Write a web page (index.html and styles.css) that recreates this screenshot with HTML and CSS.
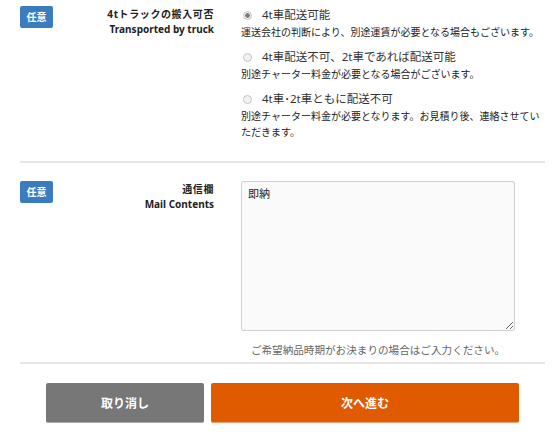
FILE: index.html
```html
<!DOCTYPE html>
<html lang="ja">

<head>
    <meta charset="UTF-8">
    <meta name="viewport" content="width=device-width, initial-scale=1.0">
    <title>配送情報</title>
    <link rel="stylesheet" href="styles.css">
</head>

<body>

    <div class="form">
        <div class="row">
            <div class="badge-col"><span class="badge">任意</span></div>
            <div class="label">
                <span class="label-ja">4tトラックの搬入可否</span>
                <span class="label-en">Transported by truck</span>
            </div>
            <div class="field">
                <label class="option">
                    <span class="option-title"><input type="radio" name="truck" checked>4t車配送可能</span>
                    <span class="option-desc">運送会社の判断により、別途運賃が必要となる場合もございます。</span>
                </label>
                <label class="option">
                    <span class="option-title"><input type="radio" name="truck">4t車配送不可、2t車であれば配送可能</span>
                    <span class="option-desc">別途チャーター料金が必要となる場合がございます。</span>
                </label>
                <label class="option">
                    <span class="option-title"><input type="radio" name="truck">4t車･2t車ともに配送不可</span>
                    <span class="option-desc">別途チャーター料金が必要となります。お見積り後、連絡させていただきます。</span>
                </label>
            </div>
        </div>

        <div class="row row-mail">
            <div class="badge-col"><span class="badge">任意</span></div>
            <div class="label">
                <span class="label-ja">通信欄</span>
                <span class="label-en">Mail Contents</span>
            </div>
            <div class="field">
                <textarea id="mailContents">即納</textarea>
                <p class="help">ご希望納品時期がお決まりの場合はご入力ください。</p>
            </div>
        </div>

        <div class="actions">
            <button class="btn btn-cancel">取り消し</button>
            <button class="btn btn-next">次へ進む</button>
        </div>
    </div>

</body>

</html>
```

FILE: styles.css
```css
body {
    margin: 0;
    padding: 0;
    background-color: #fff;
    color: #333;
    font-family: "Noto Sans", "Noto Sans CJK JP", sans-serif;
}

.form {
    width: 525px;
    padding: 6px 0 0 20px;
}

.row {
    display: flex;
    padding-bottom: 21px;
    border-bottom: 2px solid #e5e5e5;
}

.row-mail {
    padding-top: 18px;
    padding-bottom: 4px;
}

.badge-col {
    width: 33px;
    flex: none;
}

.badge {
    display: block;
    width: 33px;
    height: 22px;
    line-height: 22px;
    text-align: center;
    background-color: #3a7dbf;
    color: #fff;
    font-size: 10px;
    font-weight: bold;
    border-radius: 2px;
}

.label {
    width: 161px;
    flex: none;
    text-align: right;
    padding-top: 1px;
    font-size: 10px;
    font-weight: bold;
    line-height: 15px;
    color: #222;
}

.label-ja,
.label-en {
    display: block;
}

.label-ja {
    letter-spacing: 0.6px;
}

.field {
    margin-left: 27px;
    width: 304px;
}

.option {
    display: block;
    margin-bottom: 8px;
}

.option:last-child {
    margin-bottom: 0;
}

.option-title {
    display: flex;
    align-items: center;
    font-size: 11.5px;
    line-height: 18px;
    color: #333;
}

.option-desc {
    display: block;
    font-size: 10px;
    line-height: 16px;
    color: #222;
}

input[type="radio"] {
    appearance: none;
    -webkit-appearance: none;
    width: 9px;
    height: 9px;
    margin: 0 10px 0 2px;
    border: 1px solid #c4c4c4;
    border-radius: 50%;
    background-color: #f2f2f2;
}

input[type="radio"]:checked {
    background: radial-gradient(circle, #7a7a7a 0 2px, #f2f2f2 2.6px);
}

#mailContents {
    display: block;
    box-sizing: border-box;
    width: 274px;
    height: 150px;
    margin: 0;
    padding: 3px 6px;
    border: 1px solid #cfcfcf;
    border-radius: 2px;
    background-color: #fafafa;
    font-family: "Liberation Serif", "Noto Sans CJK JP", serif;
    font-size: 11px;
    color: #222;
}

.help {
    width: 274px;
    margin: 11px 0 0;
    text-align: center;
    font-size: 10.6px;
    line-height: 16px;
    color: #666;
}

.actions {
    display: flex;
    gap: 7px;
    padding: 19px 0 0 26px;
}

.btn {
    height: 40px;
    border: none;
    border-radius: 2px;
    color: #fff;
    font-family: "Noto Sans CJK JP", sans-serif;
    font-size: 12px;
    font-weight: bold;
    cursor: pointer;
}

.btn-cancel {
    width: 158px;
    background-color: #777;
    border-bottom: 1px solid #aaa;
}

.btn-next {
    width: 308px;
    background-color: #e05a00;
    border-bottom: 1px solid #f0a070;
}
```
